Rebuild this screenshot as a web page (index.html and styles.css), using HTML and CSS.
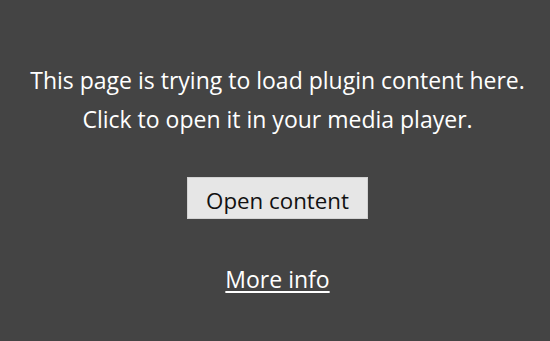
FILE: index.html
```html
<!DOCTYPE html>
<html lang="en">
	<head>
	<meta charset="UTF-8" />
	<title>Plugin content</title>
	<link rel="stylesheet" href="styles.css">
	</head>
	<body>
		<div class="plugin">
			<p class="message">This page is trying to load plugin content here.<br>Click to open it in your media player.</p>
			<button class="open">Open content</button>
			<a class="more" href="#">More info</a>
		</div>
	</body>
</html>
```

FILE: styles.css
```css
* {
	padding: 0;
	margin: 0;
	box-sizing: border-box;
}

body {
	background: #444444;
	font-family: 'Open Sans', sans-serif;
	color: #ffffff;
}

.plugin {
	height: 341px;
	display: flex;
	flex-direction: column;
	align-items: center;
	padding-top: 61px;
	padding-left: 5px;
}

.message {
	font-size: 23px;
	line-height: 39px;
	text-align: center;
}

.open {
	margin-top: 38px;
	width: 181px;
	height: 42px;
	padding-top: 4px;
	background: #e6e6e6;
	border: 1px solid #d2d2d2;
	font-family: inherit;
	font-size: 22.3px;
	color: #111111;
}

.more {
	display: block;
	margin-top: 45px;
	font-size: 23px;
	line-height: 30px;
	color: #ffffff;
	text-decoration: underline;
	text-decoration-thickness: 2px;
	text-underline-offset: 3px;
}
```
